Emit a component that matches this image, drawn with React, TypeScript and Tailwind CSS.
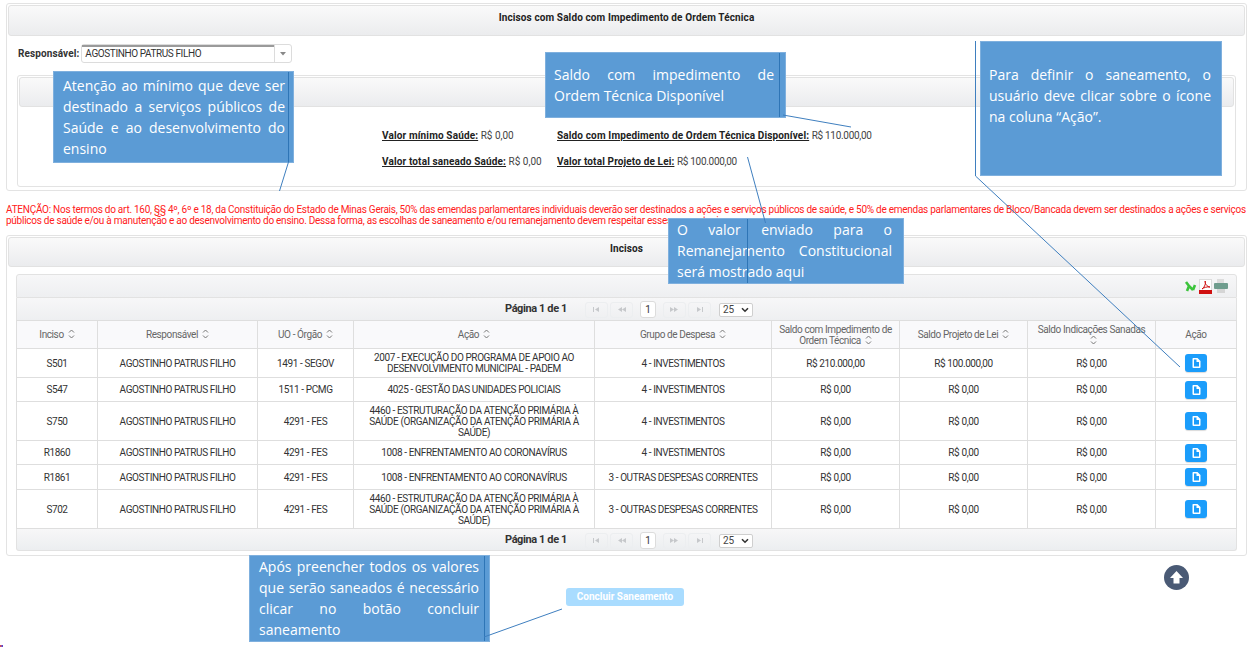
import React from "react";

const F = "font-['Roboto','Noto_Sans',sans-serif]";

type Row = { i: string; uo: string; a: string[]; g: string; s: string; p: string; h: string };
const rows: Row[] = [
  { i: "S501", uo: "1491 - SEGOV", a: ["2007 - EXECUÇÃO DO PROGRAMA DE APOIO AO", "DESENVOLVIMENTO MUNICIPAL - PADEM"], g: "4 - INVESTIMENTOS", s: "R$ 210.000,00", p: "R$ 100.000,00", h: "h-[29px]" },
  { i: "S547", uo: "1511 - PCMG", a: ["4025 - GESTÃO DAS UNIDADES POLICIAIS"], g: "4 - INVESTIMENTOS", s: "R$ 0,00", p: "R$ 0,00", h: "h-[24px]" },
  { i: "S750", uo: "4291 - FES", a: ["4460 - ESTRUTURAÇÃO DA ATENÇÃO PRIMÁRIA À", "SAÚDE (ORGANIZAÇÃO DA ATENÇÃO PRIMÁRIA À", "SAÚDE)"], g: "4 - INVESTIMENTOS", s: "R$ 0,00", p: "R$ 0,00", h: "h-[39px]" },
  { i: "R1860", uo: "4291 - FES", a: ["1008 - ENFRENTAMENTO AO CORONAVÍRUS"], g: "4 - INVESTIMENTOS", s: "R$ 0,00", p: "R$ 0,00", h: "h-[24px]" },
  { i: "R1861", uo: "4291 - FES", a: ["1008 - ENFRENTAMENTO AO CORONAVÍRUS"], g: "3 - OUTRAS DESPESAS CORRENTES", s: "R$ 0,00", p: "R$ 0,00", h: "h-[25px]" },
  { i: "S702", uo: "4291 - FES", a: ["4460 - ESTRUTURAÇÃO DA ATENÇÃO PRIMÁRIA À", "SAÚDE (ORGANIZAÇÃO DA ATENÇÃO PRIMÁRIA À", "SAÚDE)"], g: "3 - OUTRAS DESPESAS CORRENTES", s: "R$ 0,00", p: "R$ 0,00", h: "h-[39px]" },
];

function Sort() {
  return (
    <svg width="7" height="10" viewBox="0 0 7 10" className="inline-block ml-[4px] align-[-1px]" fill="none" stroke="#777" strokeWidth="1">
      <path d="M1 3.5 L3.5 1 L6 3.5 M1 6.5 L3.5 9 L6 6.5" />
    </svg>
  );
}

function FileIcon() {
  return (
    <svg width="9" height="10" viewBox="0 0 9 10">
      <path fillRule="evenodd" fill="#fff" d="M1 0H5.5L8.5 3V9a1 1 0 0 1-1 1H1.5a1 1 0 0 1-1-1V1a1 1 0 0 1 .5-1ZM2 1.5V8.5H7V4H4.5V1.5Z" />
    </svg>
  );
}

function PagerIcon({ d }: { d: string }) {
  return (
    <svg width="11" height="7" viewBox="0 0 11 7" fill="#c6c8cb">
      <path d={d} />
    </svg>
  );
}

function Pager() {
  const b = "w-[23px] h-[16px] border border-[#eceef0] rounded-[3px] flex items-center justify-center";
  return (
    <div className="relative h-full">
      <span className="absolute left-[488px] top-[4px] text-[11px] leading-[14px] tracking-[-0.4px] font-bold text-[#333]">Página 1 de 1</span>
      <div className="absolute left-[568px] top-[3px] flex items-center">
        <span className={b}><PagerIcon d="M2 1H3V6H2ZM8 1V6L4 3.5Z" /></span>
        <span className={b + " ml-[2px]"}><PagerIcon d="M6 1V6L2 3.5ZM10 1V6L6 3.5Z" /></span>
        <span className="ml-[7px] w-[16px] h-[17px] bg-white border border-[#dcdcdc] rounded-[3px] flex items-center justify-center text-[10px] text-[#333]">1</span>
        <span className={b + " ml-[7px]"}><PagerIcon d="M1 1V6L5 3.5ZM5 1V6L9 3.5Z" /></span>
        <span className={b + " ml-[2px]"}><PagerIcon d="M3 1V6L7 3.5ZM8 1H9V6H8Z" /></span>
        <span className="ml-[8px] w-[34px] h-[14px] bg-white border border-[#cfcfcf] rounded-[2px] flex items-center justify-between px-[3px] text-[10px] text-[#444]">
          25
          <svg width="8" height="6" viewBox="0 0 8 6" fill="none" stroke="#333" strokeWidth="1.6"><path d="M1 1.2 L4 4.2 L7 1.2" /></svg>
        </span>
      </div>
    </div>
  );
}

function Callout({ pos, line, children }: { pos: string; line?: string; children: React.ReactNode }) {
  return (
    <div className={"absolute bg-[#5b9bd5] border border-[#7fb0de] text-white text-[14px] leading-[21px] font-['Open_Sans',sans-serif] text-justify " + pos}>
      {line && <div className={"absolute top-0 bottom-0 w-[1px] bg-[#2e75b6] " + line} />}
      {children}
    </div>
  );
}

const hdr = "bg-linear-to-b from-[#fafafa] to-[#ebecee] border border-[#e2e2e2] rounded-[3px] flex justify-center text-[10px] leading-[12px] tracking-[0.12px] font-bold text-[#222]";

export default function App() {
  const th = "border border-[#dedede] font-normal text-[10px] leading-[11px] tracking-[-0.4px] text-[#666] text-center px-[2px]";
  const td = "border border-[#dedede] text-[10px] leading-[11px] tracking-[-0.4px] text-[#333] text-center px-[2px]";
  const lbl = "underline text-[#222] tracking-[0.14px]";
  return (
    <div className={"relative w-[1253px] h-[647px] overflow-hidden bg-white pt-[3px] px-[6px] " + F}>
      {/* Top panel */}
      <section className="h-[188px] w-[1241px] border border-[#e3e3e3] rounded-[3px] p-[1px] flex flex-col">
        <div className={hdr + " h-[31px] pt-[6px]"}>Incisos com Saldo com Impedimento de Ordem Técnica</div>
        <div className="flex items-center mt-[8px] ml-[10px] h-[19px]">
          <span className="text-[10px] font-bold text-[#333] tracking-[0.1px]">Responsável:</span>
          <div className="ml-[2px] w-[211px] h-[19px] border border-[#dcdcdc] rounded-[3px] flex">
            <div className="w-[192px] border-t-2 border-[#9a9a9a] pl-[3px] text-[10px] leading-[13px] tracking-[-0.4px] text-[#333]">AGOSTINHO PATRUS FILHO</div>
            <div className="flex-1 border-l border-[#dcdcdc] flex items-center justify-center">
              <svg width="6" height="4" viewBox="0 0 6 4"><path d="M0 0H6L3 3.5Z" fill="#888" /></svg>
            </div>
          </div>
        </div>
        <div className="mt-[12px] mx-[9px] h-[112px] border border-[#e3e3e3] rounded-[3px] p-[1px]">
          <div className={hdr + " h-[30px]"} />
          <div className="ml-[363px] mt-[23px] grid grid-cols-[175px_1fr] gap-y-[15px] text-[10px] leading-[11px] text-[#444]">
            <div><b className={lbl}>Valor mínimo Saúde:</b> R$ 0,00</div>
            <div><b className={lbl}>Saldo com Impedimento de Ordem Técnica Disponível:</b> <span className="tracking-[-0.3px]">R$ 110.000,00</span></div>
            <div><b className={lbl}>Valor total saneado Saúde:</b> R$ 0,00</div>
            <div><b className={lbl}>Valor total Projeto de Lei:</b> <span className="tracking-[-0.3px]">R$ 100.000,00</span></div>
          </div>
        </div>
      </section>

      {/* Warning */}
      <p className="mt-[13px] w-[1241px] text-[10px] leading-[11px] tracking-[-0.26px] text-[#ff2020]">
        ATENÇÃO: Nos termos do art. 160, §§ 4º, 6º e 18, da Constituição do Estado de Minas Gerais, 50% das emendas parlamentares individuais deverão ser destinados a ações e serviços públicos de saúde, e 50% de emendas parlamentares de Bloco/Bancada devem ser destinados a ações e serviços públicos de saúde e/ou à manutenção e ao desenvolvimento do ensino. Dessa forma, as escolhas de saneamento e/ou remanejamento devem respeitar esses percentuais.
      </p>

      {/* Table panel */}
      <section className="mt-[9px] h-[321px] w-[1241px] border border-[#e3e3e3] rounded-[3px] p-[1px]">
        <div className={hdr + " h-[30px] pt-[5px]"}>Incisos</div>
        <div className="mt-[7px] mx-[8px] w-[1221px]">
          <div className="h-[24px] bg-linear-to-b from-[#f7f7f8] to-[#eeeff1] border border-[#e2e2e2] rounded-t-[3px] flex items-center justify-end gap-[2px] pr-[8px]">
            <svg width="13" height="13" viewBox="0 0 13 13" fill="none" stroke="#3cc43c" strokeWidth="2.6"><path d="M2 2 L5 6 L9 10 M5 6 L3 11 M9 10 L11 5" /></svg>
            <svg width="13" height="15" viewBox="0 0 13 15"><rect x=".5" y=".5" width="12" height="14" fill="#fff" stroke="#ddd" /><rect x="0" y="11" width="13" height="4" fill="#d01010" /><path d="M3 10 C6 8 7 4 6.2 2 C5.5 4 8 8 11 8 C8 7.5 5 8.5 3 10Z" fill="none" stroke="#d01010" strokeWidth="1" /></svg>
            <svg width="14" height="14" viewBox="0 0 14 14"><rect x="3" y="0" width="7" height="4" fill="#ddd" /><rect x="0" y="4" width="14" height="6" rx="1" fill="#6f9d8e" /><rect x="3" y="10" width="8" height="4" fill="#d5d5d5" /></svg>
          </div>
          <div className="h-[22px] bg-linear-to-b from-[#f7f7f8] to-[#eeeff1] border-x border-[#e2e2e2]"><Pager /></div>
          <table className="table-fixed border-collapse w-[1220px]">
            <colgroup>
              <col className="w-[81px]" /><col className="w-[160px]" /><col className="w-[96px]" /><col className="w-[241px]" /><col className="w-[177px]" /><col className="w-[128px]" /><col className="w-[128px]" /><col className="w-[128px]" /><col className="w-[81px]" />
            </colgroup>
            <thead>
              <tr className="h-[28px] bg-[#f9f9fb]">
                <th className={th}>Inciso<Sort /></th>
                <th className={th}>Responsável<Sort /></th>
                <th className={th}>UO - Órgão<Sort /></th>
                <th className={th}>Ação<Sort /></th>
                <th className={th}>Grupo de Despesa<Sort /></th>
                <th className={th}>Saldo com Impedimento de Ordem Técnica<Sort /></th>
                <th className={th}>Saldo Projeto de Lei<Sort /></th>
                <th className={th}>Saldo Indicações Sanadas<br /><Sort /></th>
                <th className={th}>Ação</th>
              </tr>
            </thead>
            <tbody>
              {rows.map((r) => (
                <tr key={r.i} className={r.h}>
                  <td className={td}>{r.i}</td>
                  <td className={td}>AGOSTINHO PATRUS FILHO</td>
                  <td className={td}>{r.uo}</td>
                  <td className={td}>{r.a.map((l) => <div key={l}>{l}</div>)}</td>
                  <td className={td}>{r.g}</td>
                  <td className={td}>{r.s}</td>
                  <td className={td}>{r.p}</td>
                  <td className={td}>R$ 0,00</td>
                  <td className={td}>
                    <span className="mx-auto w-[22px] h-[18px] rounded-[3px] bg-[#1b9dfb] flex items-center justify-center shadow-[0_1px_1px_rgba(0,0,0,0.15)]"><FileIcon /></span>
                  </td>
                </tr>
              ))}
            </tbody>
          </table>
          <div className="h-[22px] bg-linear-to-b from-[#f7f7f8] to-[#eceef0] border border-t-0 border-[#e2e2e2] rounded-b-[3px]"><Pager /></div>
        </div>
      </section>

      {/* Bottom */}
      <div className="relative h-[90px]">
        <button className="absolute left-[560px] top-[32px] w-[118px] h-[18px] rounded-[3px] bg-[#a9dcff] text-white text-[10px] font-bold leading-none">Concluir Saneamento</button>
        <div className="absolute left-[1158px] top-[9px] w-[25px] h-[25px] rounded-full bg-[#4a5a75] flex items-center justify-center">
          <svg width="15" height="15" viewBox="0 0 15 15"><path d="M7.5 1 L14 8 H10.5 V13.5 H4.5 V8 H1 Z" fill="#fff" /></svg>
        </div>
      </div>

      {/* Tutorial callouts overlay */}
      <Callout pos="left-[53px] top-[71px] w-[241px] h-[92px] pl-[9px] pr-[8px] pt-[3px]" line="left-[234px]">
        Atenção ao mínimo que deve ser destinado a serviços públicos de Saúde e ao desenvolvimento do ensino
      </Callout>
      <Callout pos="left-[545px] top-[52px] w-[241px] h-[66px] pl-[8px] pr-[11px] pt-[11px]" line="left-[233px]">
        Saldo com impedimento de Ordem Técnica Disponível
      </Callout>
      <Callout pos="left-[980px] top-[41px] w-[242px] h-[135px] pl-[8px] pr-[10px] pt-[22px]">
        Para definir o saneamento, o usuário deve clicar sobre o ícone na coluna “Ação”.
      </Callout>
      <Callout pos="left-[668px] top-[218px] w-[236px] h-[66px] pl-[8px] pr-[11px] pt-0" line="left-[78px]">
        O valor enviado para o Remanejamento Constitucional será mostrado aqui
      </Callout>
      <Callout pos="left-[249px] top-[555px] w-[241px] h-[87px] pl-[9px] pr-[10px] pt-0" line="left-[234px]">
        Após preencher todos os valores que serão saneados é necessário clicar no botão concluir saneamento
      </Callout>

      {/* Connector lines */}
      <svg className="absolute left-0 top-0 pointer-events-none" width="1253" height="647" fill="none" stroke="#3f7fbf" strokeWidth="1">
        <path d="M288.5 162 L279.5 191" />
        <path d="M783 115 L851 127" />
        <path d="M975.5 41 V176 L1180 367" />
        <path d="M747.5 157 L765.5 223" />
        <path d="M484 637 L562 609" />
      </svg>
      <div className="absolute left-0 top-[645px] w-[3px] h-[2px] bg-linear-to-r from-[#e33] to-[#33e]" />
    </div>
  );
}
